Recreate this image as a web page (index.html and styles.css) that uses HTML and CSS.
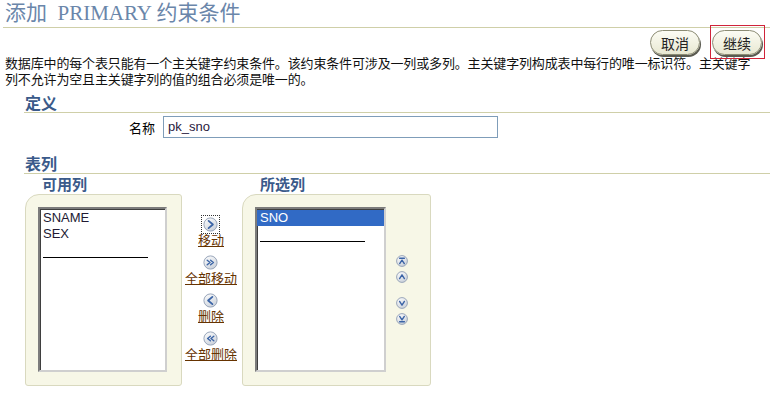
FILE: index.html
```html
<!DOCTYPE html>
<html lang="zh-CN">
<head>
<meta charset="utf-8">
<title>添加 PRIMARY 约束条件</title>
<link rel="stylesheet" href="styles.css">
</head>
<body>
<div class="title">添加&nbsp; PRIMARY 约束条件</div>
<div class="actions">
  <button class="btn">取消</button>
  <span class="focus"><button class="btn">继续</button></span>
</div>
<p class="desc">数据库中的每个表只能有一个主关键字约束条件。该约束条件可涉及一列或多列。主关键字列构成表中每行的唯一标识符。主关键字列不允许为空且主关键字列的值的组合必须是唯一的。</p>

<h2 class="sec-head">定义</h2>
<div class="field-row">
  <span class="field-label">名称</span>
  <div class="field-input">pk_sno</div>
</div>

<h2 class="sec-head sec-head-2">表列</h2>
<div class="shuttle">
  <div class="col col-left">
    <div class="col-head">可用列</div>
    <div class="panel">
      <div class="listbox">
        <div class="opt">SNAME</div>
        <div class="opt">SEX</div>
        <div class="opt"><span class="rule"></span></div>
      </div>
    </div>
  </div>

  <div class="moves">
    <a class="move">
      <span class="icon focused"><svg width="15" height="15" viewBox="0 0 15 15"><circle cx="7.5" cy="7.5" r="6.6" class="ic-bg"/><path d="M5.6 3.9 L9.9 7.5 L5.6 11.1" class="ic-ch"/></svg></span>
      <span class="move-label">移动</span>
    </a>
    <a class="move">
      <span class="icon"><svg width="15" height="15" viewBox="0 0 15 15"><circle cx="7.5" cy="7.5" r="6.6" class="ic-bg"/><path d="M4.2 5.2 L7 7.5 L4.2 9.8 M7.6 5.2 L10.4 7.5 L7.6 9.8" class="ic-ch thin"/></svg></span>
      <span class="move-label">全部移动</span>
    </a>
    <a class="move">
      <span class="icon"><svg width="15" height="15" viewBox="0 0 15 15"><circle cx="7.5" cy="7.5" r="6.6" class="ic-bg"/><path d="M9.4 3.9 L5.1 7.5 L9.4 11.1" class="ic-ch"/></svg></span>
      <span class="move-label">删除</span>
    </a>
    <a class="move">
      <span class="icon"><svg width="15" height="15" viewBox="0 0 15 15"><circle cx="7.5" cy="7.5" r="6.6" class="ic-bg"/><path d="M7.4 5.2 L4.6 7.5 L7.4 9.8 M10.8 5.2 L8 7.5 L10.8 9.8" class="ic-ch thin"/></svg></span>
      <span class="move-label">全部删除</span>
    </a>
  </div>

  <div class="col col-right">
    <div class="col-head">所选列</div>
    <div class="panel panel-right">
      <div class="listbox listbox-right">
        <div class="opt selected">SNO</div>
        <div class="opt"><span class="rule"></span></div>
      </div>
      <div class="reorder">
        <svg class="ro" width="12" height="12" viewBox="0 0 12 12"><circle cx="6" cy="6" r="5.4" class="ic-bg"/><path d="M3.6 3.2 H8.4 M3.7 8.6 L6 5.2 L8.3 8.6" class="ic-ch ro-ch"/></svg>
        <svg class="ro" width="12" height="12" viewBox="0 0 12 12"><circle cx="6" cy="6" r="5.4" class="ic-bg"/><path d="M3.6 7.6 L6 3.8 L8.4 7.6" class="ic-ch ro-ch"/></svg>
        <svg class="ro ro-gap" width="12" height="12" viewBox="0 0 12 12"><circle cx="6" cy="6" r="5.4" class="ic-bg"/><path d="M3.6 4.4 L6 8.2 L8.4 4.4" class="ic-ch ro-ch"/></svg>
        <svg class="ro" width="12" height="12" viewBox="0 0 12 12"><circle cx="6" cy="6" r="5.4" class="ic-bg"/><path d="M3.7 3.4 L6 6.8 L8.3 3.4 M3.6 8.8 H8.4" class="ic-ch ro-ch"/></svg>
      </div>
    </div>
  </div>
</div>

<svg class="defs" width="0" height="0" aria-hidden="true">
  <defs>
    <linearGradient id="icg" x1="0" y1="0" x2="0.6" y2="1">
      <stop offset="0" stop-color="#ffffff"/>
      <stop offset="1" stop-color="#cdd3dc"/>
    </linearGradient>
  </defs>
</svg>
</body>
</html>
```

FILE: styles.css
```css
* { box-sizing: border-box; }

html, body {
  margin: 0;
  padding: 0;
  background: #ffffff;
}

body {
  width: 770px;
  height: 393px;
  overflow: hidden;
  font-family: "Liberation Sans", "Noto Sans CJK SC", sans-serif;
  font-size: 13px;
  color: #000;
}

.title {
  height: 28px;
  margin-left: 3px;
  padding-left: 2px;
  border-bottom: 1px solid #cfcfa8;
  font-family: "Liberation Serif", "Noto Sans CJK SC", serif;
  font-size: 21px;
  line-height: 27px;
  color: #6a86aa;
  white-space: nowrap;
}

.actions {
  display: flex;
  justify-content: flex-end;
  gap: 12px;
  height: 27px;
  padding: 2px 8px 0 0;
}

.btn {
  height: 25px;
  padding: 0 10px;
  border: 1px solid #8c8c74;
  border-radius: 13px;
  background: linear-gradient(#fcfcf4, #e8e8d2);
  box-shadow: 1px 2px 0 #5a5a50;
  font-family: "Noto Sans CJK SC", sans-serif;
  font-size: 14px;
  line-height: 22px;
  color: #222;
}

.focus {
  position: relative;
  display: inline-block;
}

.focus::after {
  content: "";
  position: absolute;
  left: -2px;
  right: -3px;
  top: -5px;
  bottom: -4px;
  border: 1px solid #d0243a;
}

.desc {
  margin: 0;
  padding: 0 8px 0 5px;
  font-family: "Noto Sans CJK SC", sans-serif;
  font-size: 13px;
  letter-spacing: -0.15px;
  line-height: 16px;
  color: #111;
}

.sec-head {
  margin: 6px 0 0 24px;
  height: 20px;
  padding-left: 1px;
  border-bottom: 1px solid #cfcfa8;
  font-family: "Noto Sans CJK SC", sans-serif;
  font-size: 16px;
  font-weight: bold;
  line-height: 19px;
  color: #3a5a8a;
}

.sec-head-2 {
  margin-top: 16px;
}

.field-row {
  display: flex;
  align-items: center;
  margin-top: 3px;
}

.field-label {
  width: 155px;
  text-align: right;
  font-family: "Noto Sans CJK SC", sans-serif;
  font-size: 13px;
}

.field-input {
  margin-left: 8px;
  width: 335px;
  height: 22px;
  padding-left: 4px;
  border: 1px solid #7f9db9;
  font-size: 13px;
  line-height: 20px;
  color: #2a2040;
}

.shuttle {
  display: flex;
  margin-left: 25px;
}

.col-head {
  height: 20px;
  font-family: "Noto Sans CJK SC", sans-serif;
  font-size: 15px;
  font-weight: bold;
  line-height: 20px;
  color: #3a5a8a;
}

.col-left { width: 157px; }
.col-left .col-head { padding-left: 17px; }
.col-right { width: 189px; }
.col-right .col-head { padding-left: 18px; }

.panel {
  height: 192px;
  padding: 12px;
  border: 1px solid #d9d9bf;
  border-radius: 14px 3px 3px 3px;
  background: #f7f7e7;
}

.panel-right {
  display: flex;
}

.listbox {
  width: 129px;
  height: 165px;
  padding-top: 1px;
  background: #fff;
  border: 2px solid;
  border-color: #7c7c7c #cfcfcf #cfcfcf #7c7c7c;
  box-shadow: inset 1px 1px 0 #3f3f3f;
}

.listbox-right {
  width: 131px;
  flex: none;
}

.opt {
  height: 16px;
  padding-left: 3px;
  font-size: 13px;
  line-height: 16px;
  color: #221a33;
  white-space: nowrap;
}

.opt.selected {
  background: #316ac5;
  color: #fff;
}

.rule {
  display: block;
  width: 105px;
  height: 16px;
  border-bottom: 1px solid #000;
}

.moves {
  width: 60px;
  padding: 43px 2px 0 0;
  display: flex;
  flex-direction: column;
  align-items: center;
  gap: 8px;
}

.move {
  display: flex;
  flex-direction: column;
  align-items: center;
  cursor: pointer;
}

.icon {
  display: block;
  width: 15px;
  height: 15px;
}

.icon svg { display: block; }

.icon.focused {
  outline: 1px dotted #333;
  outline-offset: 1px;
}

.move-label {
  font-family: "Noto Sans CJK SC", sans-serif;
  font-size: 13px;
  line-height: 15px;
  color: #663300;
  text-decoration: underline;
  white-space: nowrap;
}

.ic-bg {
  fill: url(#icg);
  stroke: #8f9db3;
  stroke-width: 0.9;
}

.ic-ch {
  fill: none;
  stroke: #3b64a6;
  stroke-width: 1.8;
  stroke-linecap: round;
  stroke-linejoin: round;
}

.ic-ch.thin { stroke-width: 1.4; }
.ro-ch { stroke-width: 1.4; }

.reorder {
  margin-left: 10px;
  padding-top: 48px;
  display: flex;
  flex-direction: column;
  gap: 4px;
}

.ro { display: block; }
.ro-gap { margin-top: 10px; }

.defs {
  display: block;
  width: 0;
  height: 0;
  overflow: hidden;
}
```
